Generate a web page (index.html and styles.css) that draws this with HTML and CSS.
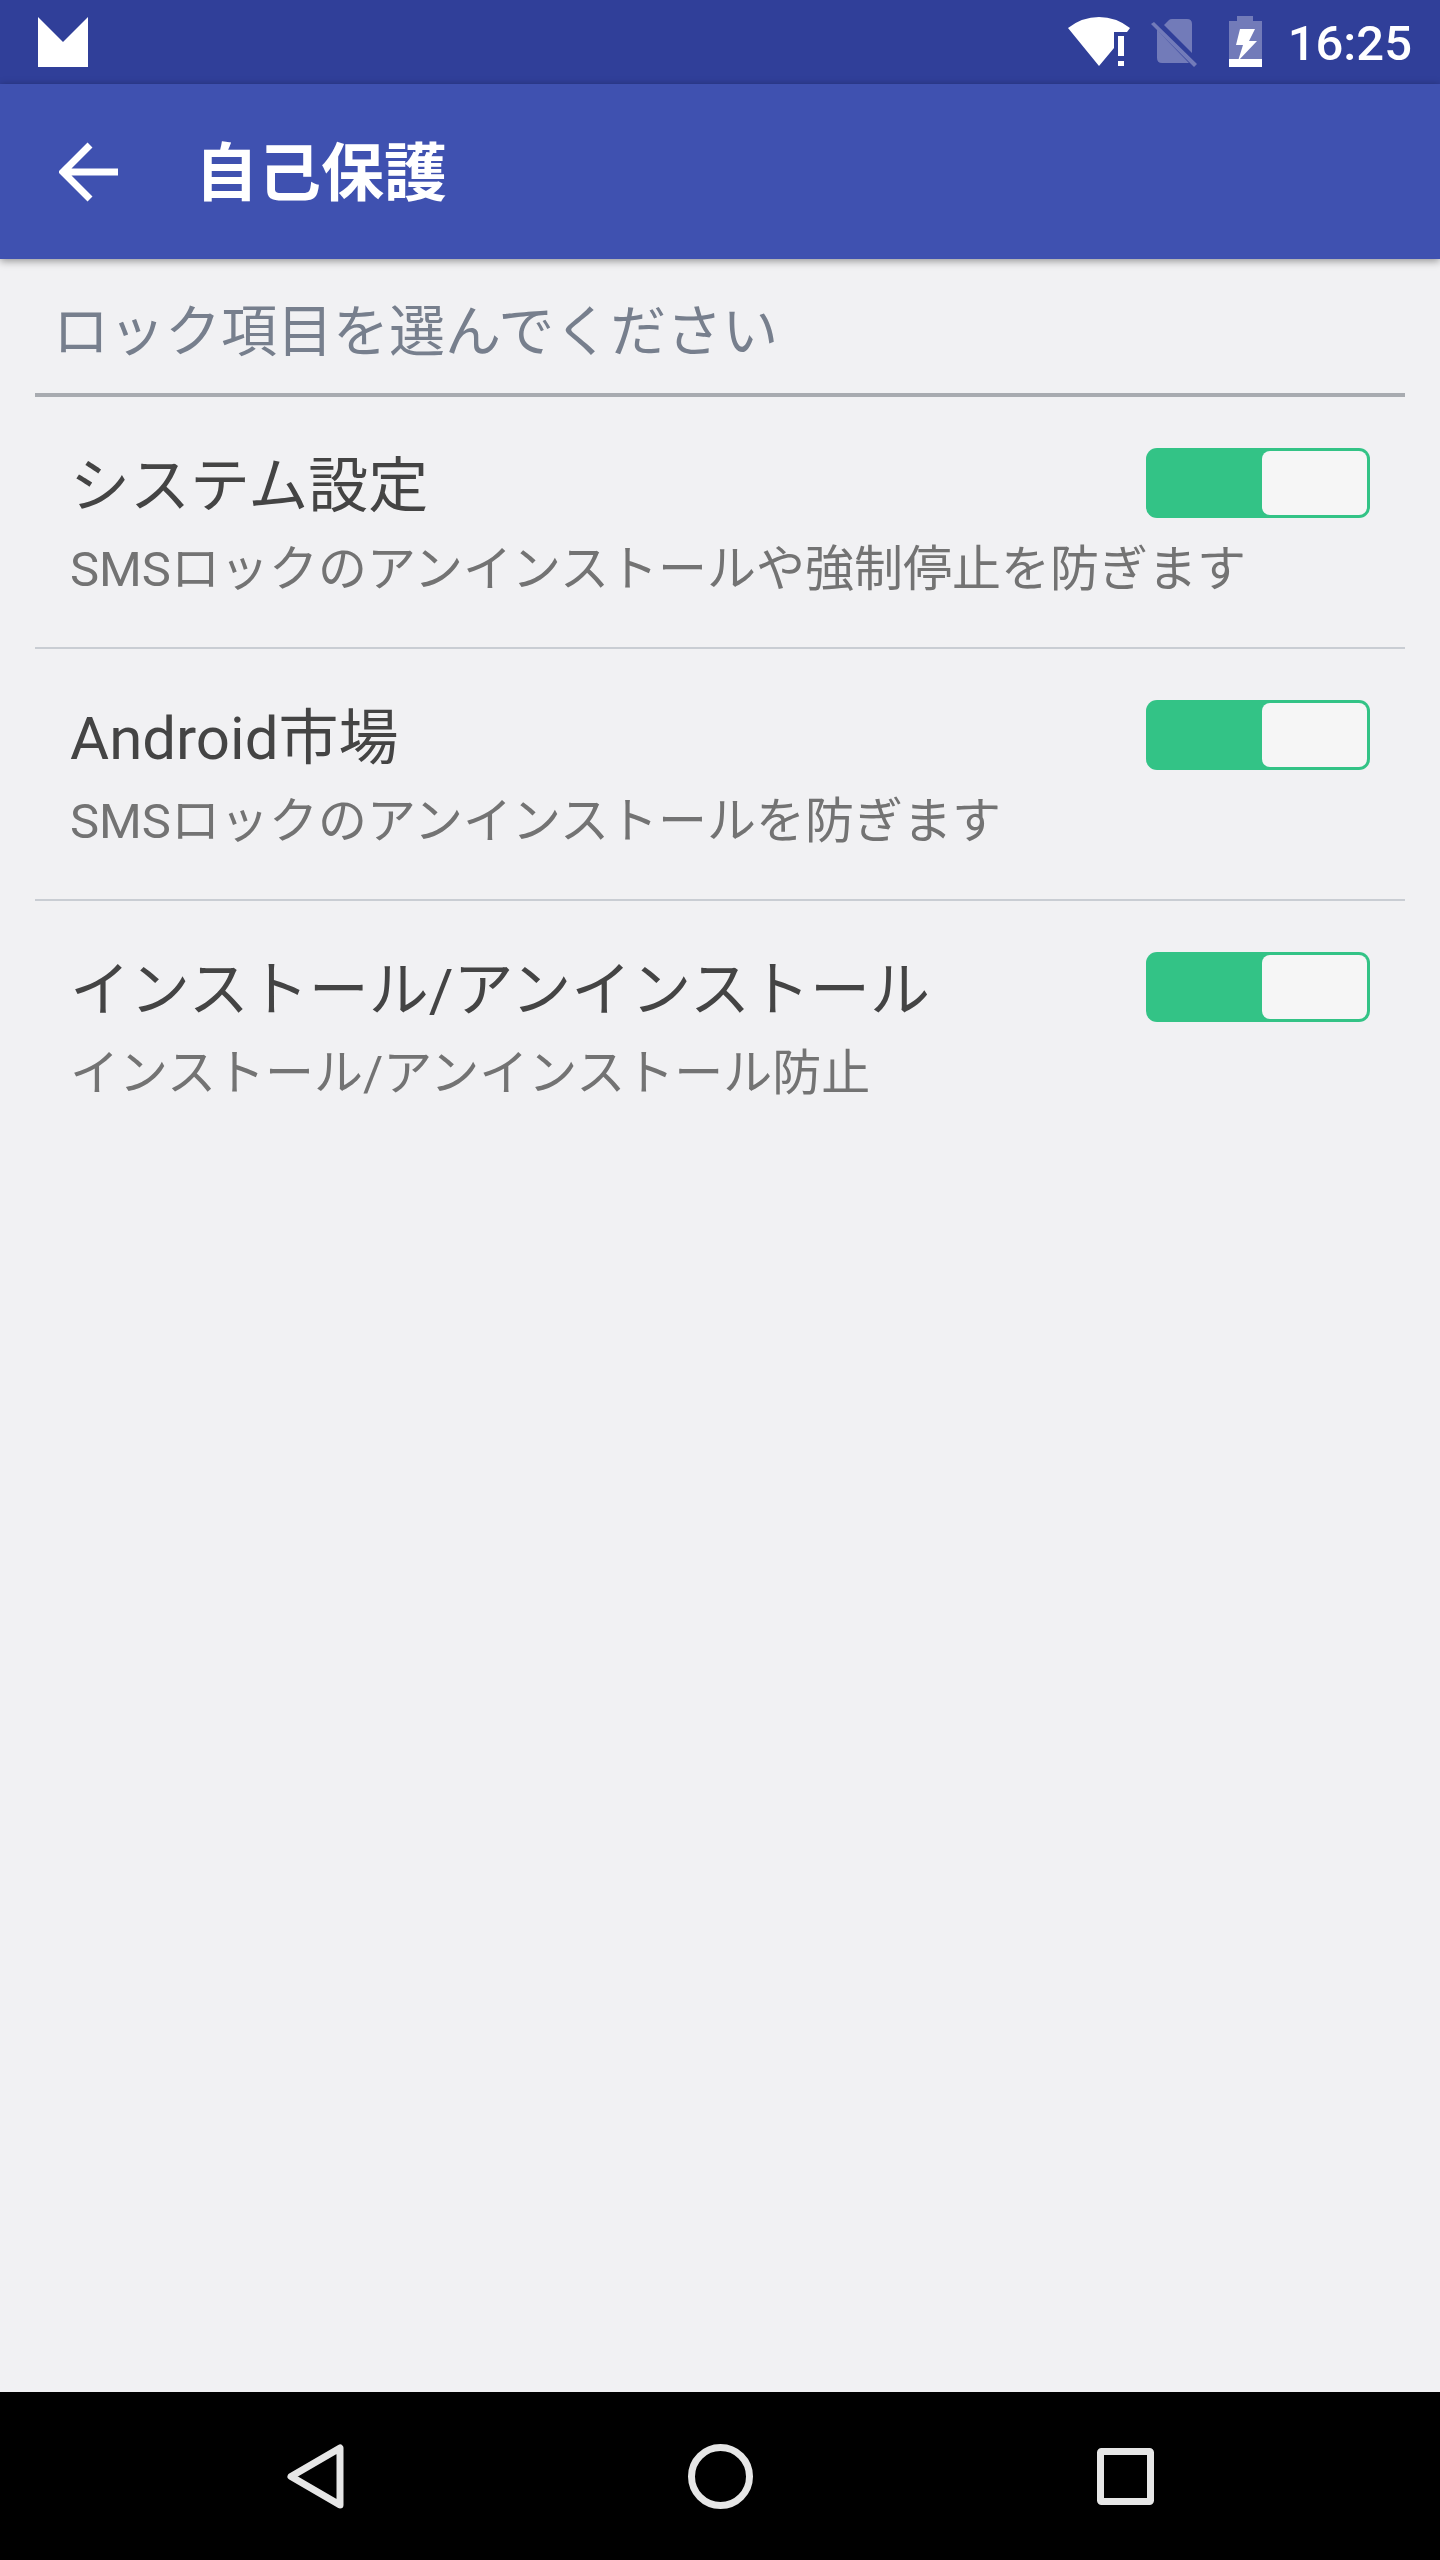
FILE: index.html
```html
<!DOCTYPE html>
<html lang="ja">
<head>
<meta charset="utf-8">
<meta name="viewport" content="width=device-width, initial-scale=1">
<title>自己保護</title>
<link rel="stylesheet" href="styles.css">
</head>
<body>
<div class="statusbar">
  <svg class="notice" width="50" height="50" viewBox="0 0 50 50" aria-hidden="true"><path d="M0 0L25 25L50 0V50H0Z"/></svg>
  <div class="indicators">
    <svg width="62" height="50" viewBox="0 0 62 50" aria-hidden="true"><path d="M0 11Q14 0 31 0Q48 0 62 11L59 15H46V31L31 49Z"/><path d="M50 19h6v20h-6zM50 44h6v5h-6z"/></svg>
    <svg class="dim" width="57" height="50" viewBox="0 0 57 50" aria-hidden="true"><path d="M13 8L18 3Q19 2 21 2H36Q41 2 41 7V36ZM6 13L38 46H11Q6 46 6 41ZM3 5L46 47L43 50L0 7Z"/></svg>
    <svg width="38" height="52" viewBox="0 0 38 52" aria-hidden="true"><path class="dim" d="M8 0H24V5H33V44H0V5H8Z"/><path d="M11 13H26L20 25H28L9 45L14 29H7ZM0 43H33V51H0Z"/></svg>
    <span class="clock">16:25</span>
  </div>
</div>
<header class="appbar">
  <button class="back" type="button" aria-label="戻る">
    <svg width="60" height="60" viewBox="0 0 60 60" aria-hidden="true"><path d="M59 30H5M31 3L4 30L31 57"/></svg>
  </button>
  <h1>自己保護</h1>
</header>
<main>
  <h2>ロック項目を選んでください</h2>
  <label class="item">
    <span class="title">システム設定</span>
    <input type="checkbox" role="switch" checked>
    <span class="detail">SMSロックのアンインストールや強制停止を防ぎます</span>
  </label>
  <label class="item">
    <span class="title">Android市場</span>
    <input type="checkbox" role="switch" checked>
    <span class="detail">SMSロックのアンインストールを防ぎます</span>
  </label>
  <label class="item">
    <span class="title">インストール/アンインストール</span>
    <input type="checkbox" role="switch" checked>
    <span class="detail">インストール/アンインストール防止</span>
  </label>
</main>
<nav class="navbar">
  <button type="button" aria-label="戻る"><svg width="66" height="66" viewBox="0 0 66 66" aria-hidden="true"><path d="M58 5V62L9 33.500Z"/></svg></button>
  <button type="button" aria-label="ホーム"><svg width="66" height="66" viewBox="0 0 66 66" aria-hidden="true"><circle cx="33.500" cy="33.500" r="29"/></svg></button>
  <button type="button" aria-label="最近のアプリ"><svg width="66" height="66" viewBox="0 0 66 66" aria-hidden="true"><rect x="8.500" y="8.500" width="50" height="50" rx="1"/></svg></button>
</nav>
</body>
</html>
```

FILE: styles.css
```css
* {
  box-sizing: border-box;
}

body {
  margin: 0;
  min-height: 100vh;
  display: flex;
  flex-direction: column;
  background: #f1f1f3;
  font-family: Roboto, "Noto Sans CJK JP", sans-serif;
}

button {
  padding: 0;
  border: 0;
  background: none;
  display: flex;
  align-items: center;
  justify-content: center;
}

.statusbar {
  height: 84px;
  padding: 0 28px 0 38px;
  display: flex;
  align-items: center;
  justify-content: space-between;
  background: #303f99;
  color: #fff;
  fill: #fff;
}

.indicators {
  display: flex;
  align-items: center;
  gap: 21px;
}

.dim {
  fill: #727bb9;
}

.clock {
  padding-top: 4px;
  font-size: 49px;
  font-weight: 500;
  line-height: 56px;
}

.appbar {
  height: 175px;
  padding: 0 59px;
  display: flex;
  align-items: center;
  gap: 76px;
  background: #3f51b0;
  color: #fff;
  box-shadow: 0 2px 8px rgba(0, 0, 0, 0.4);
}

.back svg {
  fill: none;
  stroke: #fff;
  stroke-width: 7px;
}

h1 {
  margin: 0;
  padding-top: 4px;
  font-size: 63px;
  font-weight: 700;
  line-height: 88px;
}

main {
  flex: 1;
  padding: 0 35px;
}

h2 {
  margin: 0;
  padding: 34px 18px 22px;
  border-bottom: 4px solid #a8abb0;
  color: #777f8d;
  font-size: 56px;
  font-weight: 400;
  line-height: 78px;
}

.item {
  padding: 50px 35px 44px;
  display: grid;
  grid-template-columns: 1fr auto;
  row-gap: 10px;
}

.item + .item {
  border-top: 2px solid #c9cdd3;
}

.title {
  color: #444;
  font-size: 60px;
  line-height: 80px;
}

.detail {
  grid-column: 1 / -1;
  color: #737373;
  font-size: 49px;
  line-height: 66px;
}

.item input {
  appearance: none;
  width: 224px;
  height: 70px;
  margin: 1px 0 0;
  padding: 3px;
  display: flex;
  border-radius: 11px;
  background: #33c386;
}

.item input::before {
  content: "";
  width: 105px;
  border-radius: 8px;
  background: #f6f6f6;
}

.item input:checked::before {
  margin-left: auto;
}

.navbar {
  height: 168px;
  padding: 0 113px;
  display: grid;
  grid-template-columns: repeat(3, 1fr);
  background: #000;
}

.navbar svg {
  fill: none;
  stroke: #e6e6e6;
  stroke-width: 7px;
  stroke-linejoin: round;
}
```
